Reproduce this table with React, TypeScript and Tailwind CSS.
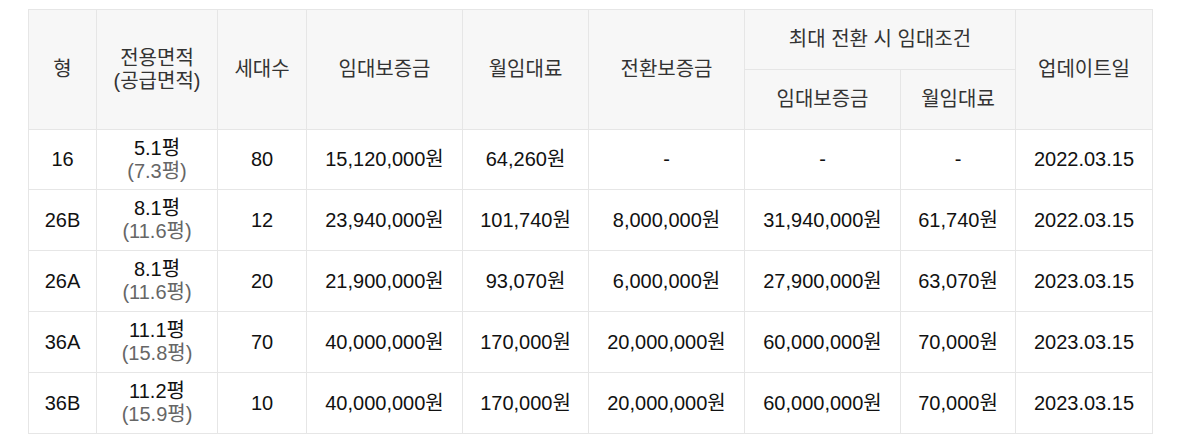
const rows = [
  { type: "16", area: "5.1평", supply: "(7.3평)", count: "80", deposit: "15,120,000원", rent: "64,260원", conv: "-", maxDeposit: "-", maxRent: "-", date: "2022.03.15" },
  { type: "26B", area: "8.1평", supply: "(11.6평)", count: "12", deposit: "23,940,000원", rent: "101,740원", conv: "8,000,000원", maxDeposit: "31,940,000원", maxRent: "61,740원", date: "2022.03.15" },
  { type: "26A", area: "8.1평", supply: "(11.6평)", count: "20", deposit: "21,900,000원", rent: "93,070원", conv: "6,000,000원", maxDeposit: "27,900,000원", maxRent: "63,070원", date: "2023.03.15" },
  { type: "36A", area: "11.1평", supply: "(15.8평)", count: "70", deposit: "40,000,000원", rent: "170,000원", conv: "20,000,000원", maxDeposit: "60,000,000원", maxRent: "70,000원", date: "2023.03.15" },
  { type: "36B", area: "11.2평", supply: "(15.9평)", count: "10", deposit: "40,000,000원", rent: "170,000원", conv: "20,000,000원", maxDeposit: "60,000,000원", maxRent: "70,000원", date: "2023.03.15" },
];

const th = "border border-[#e6e6e6] bg-[#f7f7f7] font-normal text-[#333] align-middle";
const td = "border border-[#e6e6e6] align-middle text-[#111]";

export default function App() {
  return (
    <div
      className="min-h-screen bg-white pl-[28px] pt-[9px]"
      style={{ fontFamily: '"Liberation Sans", Arial, "Noto Sans CJK KR", sans-serif' }}
    >
      <table className="w-[1124px] table-fixed border-collapse border-t border-t-[#cfcfcf] text-center text-[20px] leading-[23px]">
        <colgroup>
          <col className="w-[68px]" />
          <col className="w-[121px]" />
          <col className="w-[89px]" />
          <col className="w-[156px]" />
          <col className="w-[126px]" />
          <col className="w-[156px]" />
          <col className="w-[156px]" />
          <col className="w-[115px]" />
          <col className="w-[137px]" />
        </colgroup>
        <thead>
          <tr>
            <th rowSpan={2} className={th}>형</th>
            <th rowSpan={2} className={th}>
              전용면적
              <br />
              (공급면적)
            </th>
            <th rowSpan={2} className={th}>세대수</th>
            <th rowSpan={2} className={th}>임대보증금</th>
            <th rowSpan={2} className={th}>월임대료</th>
            <th rowSpan={2} className={th}>전환보증금</th>
            <th colSpan={2} className={`${th} h-[60px]`}>최대 전환 시 임대조건</th>
            <th rowSpan={2} className={th}>업데이트일</th>
          </tr>
          <tr>
            <th className={`${th} h-[60px]`}>임대보증금</th>
            <th className={th}>월임대료</th>
          </tr>
        </thead>
        <tbody>
          {rows.map((r, i) => (
            <tr key={r.type} className={i === 0 ? "h-[60px]" : "h-[61px]"}>
              <td className={td}>{r.type}</td>
              <td className={td}>
                <div>{r.area}</div>
                <div className="text-[#666]">{r.supply}</div>
              </td>
              <td className={td}>{r.count}</td>
              <td className={td}>{r.deposit}</td>
              <td className={td}>{r.rent}</td>
              <td className={td}>{r.conv}</td>
              <td className={td}>{r.maxDeposit}</td>
              <td className={td}>{r.maxRent}</td>
              <td className={td}>{r.date}</td>
            </tr>
          ))}
        </tbody>
      </table>
    </div>
  );
}
